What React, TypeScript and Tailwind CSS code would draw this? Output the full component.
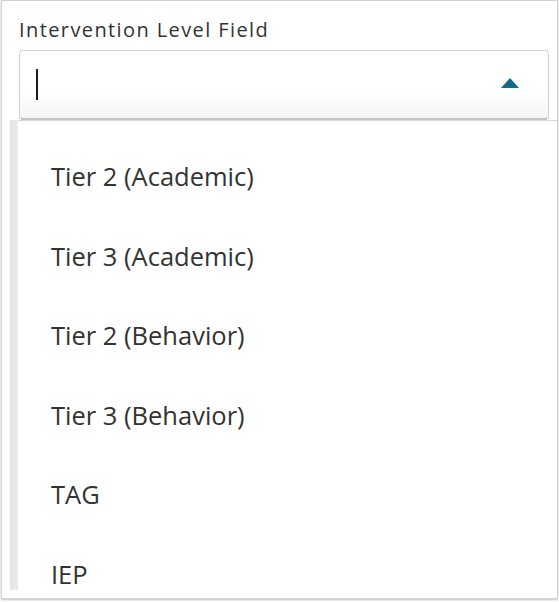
const options = [
  "Tier 2 (Academic)",
  "Tier 3 (Academic)",
  "Tier 2 (Behavior)",
  "Tier 3 (Behavior)",
  "TAG",
  "IEP",
];

export default function App() {
  return (
    <div className="w-[559px] h-[602px] bg-white font-['Open_Sans','Liberation_Sans',sans-serif]">
      <div className="ml-[1px] w-[557px] h-[599px] border border-[#d2d2d2] shadow-[0_1px_2px_rgba(0,0,0,0.25)] bg-white flex flex-col">
        {/* Label */}
        <div className="pl-[17px] pt-[17px] text-[20px] leading-[24px] tracking-[1.4px] text-[#333]">
          Intervention Level Field
        </div>

        {/* Select input */}
        <div className="ml-[17px] mt-[8px] w-[530px] h-[70px] rounded-[4px] border border-[#cfd1d8] border-b-2 border-b-[#c2c4cc] bg-gradient-to-b from-white from-60% to-[#f5f5f6] flex items-center justify-between pl-[16px] pr-[29px] shrink-0">
          <div className="w-[2px] h-[31px] bg-[#1c1c1c]" />
          <svg width="18" height="10" viewBox="0 0 18 10" className="-mt-[3px]">
            <polygon points="9,0 18,10 0,10" fill="#16698f" />
          </svg>
        </div>

        {/* Dropdown list */}
        <div className="ml-[8px] flex h-[470px] shrink-0">
          <div className="w-[8px] bg-gradient-to-r from-[#e4e4e4] to-[#ececec]" />
          <div className="flex-1 border-t border-[#d6d6d8] bg-white pt-[38px] flex flex-col gap-[45.5px]">
            {options.map((opt) => (
              <div
                key={opt}
                className="pl-[33px] text-[25.5px] leading-[34px] text-[#333]"
              >
                {opt}
              </div>
            ))}
          </div>
        </div>
      </div>
    </div>
  );
}
